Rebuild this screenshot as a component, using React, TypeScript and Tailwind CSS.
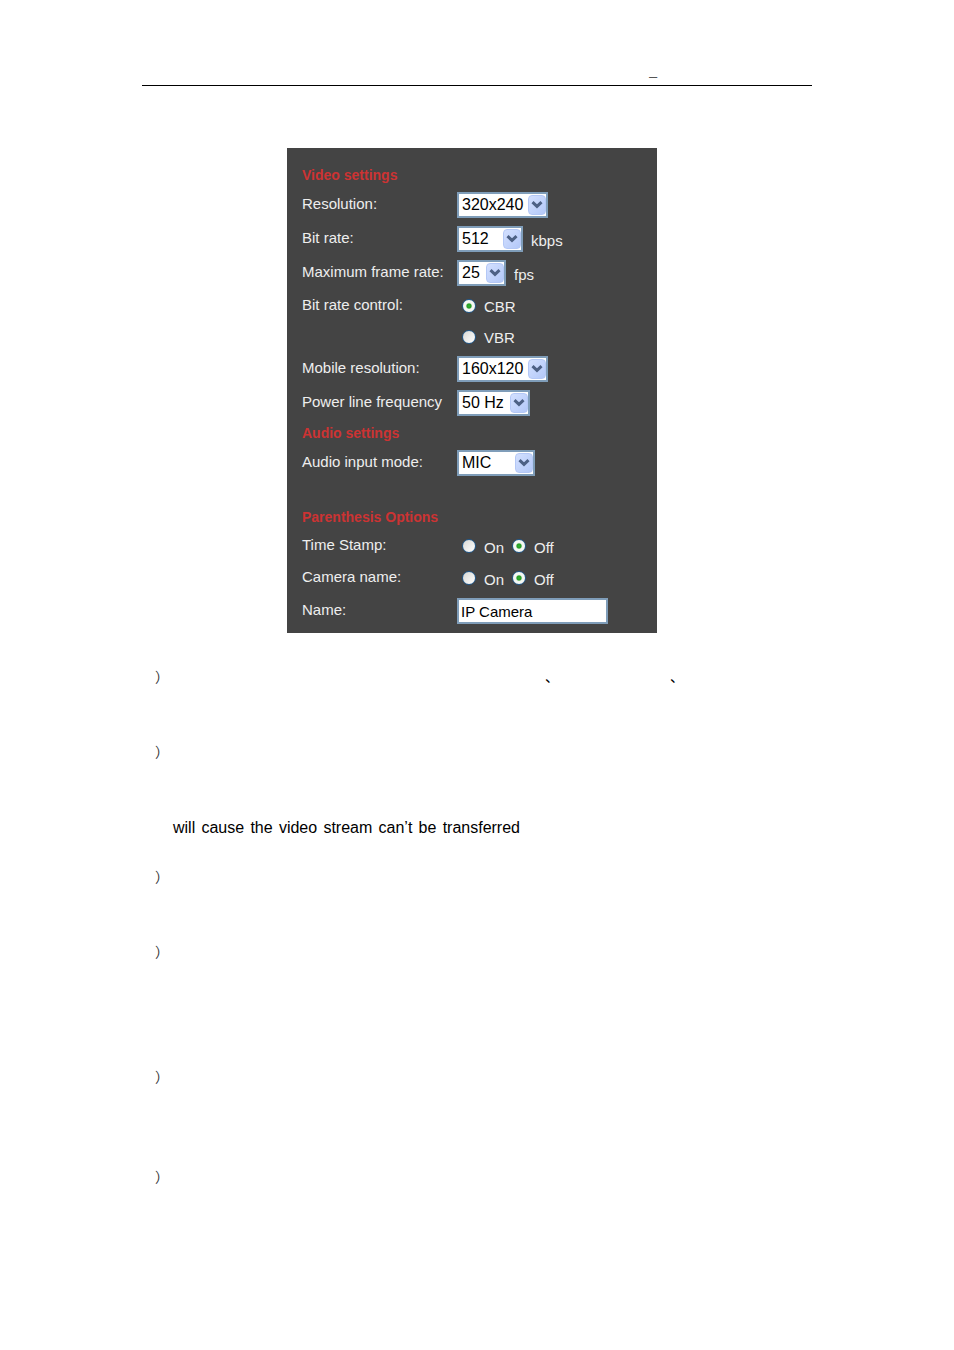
import type { ReactNode } from "react";

const Heading = ({ children }: { children: ReactNode }) => (
  <h2 className="flex h-[26px] items-center text-sm font-bold text-[#cc3333]">{children}</h2>
);

const Row = ({ label, htmlFor, children }: { label: string; htmlFor: string; children: ReactNode }) => (
  <div className="grid h-[34px] grid-cols-[155px_1fr] items-center">
    <label htmlFor={htmlFor} className="pb-0.5 whitespace-nowrap">{label}</label>
    <div className="flex items-center gap-2">{children}</div>
  </div>
);

const Select = ({ id, value, width }: { id: string; value: string; width: string }) => (
  <div className={`relative h-[26px] ${width}`}>
    <select
      id={id}
      defaultValue={value}
      className="block h-full w-full appearance-none border-2 border-[#7f9db9] bg-white pl-[3px] text-base leading-5 text-black outline-none"
    >
      <option>{value}</option>
    </select>
    <span className="pointer-events-none absolute inset-y-[3px] right-[2px] flex w-[18px] items-center justify-center rounded-sm border border-[#b4c8f6] bg-linear-to-br from-[#d3e0ff] to-[#b3c8f8]">
      <svg width="12" height="8" viewBox="0 0 12 8" fill="none" stroke="#4d6185" strokeWidth="3">
        <path d="M1.5 1.2 6 5.4l4.5-4.2" />
      </svg>
    </span>
  </div>
);

const Radio = ({ name, label, checked = false }: { name: string; label: string; checked?: boolean }) => (
  <label className="flex items-center gap-2">
    <input
      type="radio"
      name={name}
      defaultChecked={checked}
      className="h-[14px] w-[14px] appearance-none rounded-full border border-[#235a8c] bg-[linear-gradient(135deg,#d8d8d4,#ffffff)] checked:bg-[radial-gradient(circle,#35b635_0,#219a21_24%,#f1f5ef_38%,#ffffff_100%)]"
    />
    <span className="pt-[3px]">{label}</span>
  </label>
);

const OnOff = ({ label, name }: { label: string; name: string }) => (
  <fieldset className="grid h-8 grid-cols-[155px_1fr] items-center" aria-label={label}>
    <span className="pb-0.5">{label}</span>
    <div className="flex items-center gap-2 pl-[5px]">
      <Radio name={name} label="On" />
      <Radio name={name} label="Off" checked />
    </div>
  </fieldset>
);

const Settings = () => (
  <form className="w-[370px] bg-[#444444] pt-[14px] pb-[5px] pl-[15px] text-[15px] leading-5 text-[#eeeeee]">
    <Heading>Video settings</Heading>
    <Row label="Resolution:" htmlFor="resolution">
      <Select id="resolution" value="320x240" width="w-[91px]" />
    </Row>
    <Row label="Bit rate:" htmlFor="bitrate">
      <Select id="bitrate" value="512" width="w-[66px]" />
      <span className="pt-1">kbps</span>
    </Row>
    <Row label="Maximum frame rate:" htmlFor="framerate">
      <Select id="framerate" value="25" width="w-[49px]" />
      <span className="pt-1">fps</span>
    </Row>
    <fieldset className="grid grid-cols-[155px_1fr]" aria-label="Bit rate control">
      <span className="flex h-[31px] items-center pb-0.5">Bit rate control:</span>
      <div className="pl-[5px]">
        <div className="flex h-[31px] items-center">
          <Radio name="control" label="CBR" checked />
        </div>
        <div className="flex h-[31px] items-center">
          <Radio name="control" label="VBR" />
        </div>
      </div>
    </fieldset>
    <Row label="Mobile resolution:" htmlFor="mobile">
      <Select id="mobile" value="160x120" width="w-[91px]" />
    </Row>
    <Row label="Power line frequency" htmlFor="frequency">
      <Select id="frequency" value="50 Hz" width="w-[73px]" />
    </Row>
    <Heading>Audio settings</Heading>
    <Row label="Audio input mode:" htmlFor="audio">
      <Select id="audio" value="MIC" width="w-[78px]" />
    </Row>
    <div className="mt-6">
      <Heading>Parenthesis Options</Heading>
      <OnOff label="Time Stamp:" name="timestamp" />
      <OnOff label="Camera name:" name="cameraname" />
      <Row label="Name:" htmlFor="name">
        <input
          id="name"
          type="text"
          defaultValue="IP Camera"
          className="h-[26px] w-[151px] border-2 border-[#7f9db9] bg-white px-0.5 text-black outline-none"
        />
      </Row>
    </div>
  </form>
);

const Note = ({ height, children }: { height: string; children?: ReactNode }) => (
  <li className={`grid grid-cols-[18px_1fr] ${height}`}>
    <span className="text-sm leading-[25px] text-[#333333]">）</span>
    <div>{children}</div>
  </li>
);

export default function App() {
  return (
    <main className="min-h-screen bg-white font-['Liberation_Sans','Noto_Sans_CJK_SC',sans-serif] text-black">
      <div className="mx-auto max-w-[670px]">
        <header className="flex h-[86px] items-end justify-end border-b border-black pr-[155px] pb-[7px] text-sm leading-4 text-[#555555]">
          _
        </header>
        <div className="mt-[62px] flex justify-center pr-[10px]">
          <Settings />
        </div>
        <ol className="mt-8 pl-[13px] text-base leading-[25px]">
          <Note height="h-[75px]">
            <div className="flex gap-[111px] pl-[372px] text-sm leading-[25px]">
              <span>、</span>
              <span>、</span>
            </div>
          </Note>
          <Note height="h-[125px]">
            <p className="max-w-[347px] pt-[75px] text-justify [text-align-last:justify]">
              will cause the video stream can’t be transferred
            </p>
          </Note>
          <Note height="h-[75px]" />
          <Note height="h-[125px]" />
          <Note height="h-[100px]" />
          <Note height="h-[75px]" />
        </ol>
      </div>
    </main>
  );
}
